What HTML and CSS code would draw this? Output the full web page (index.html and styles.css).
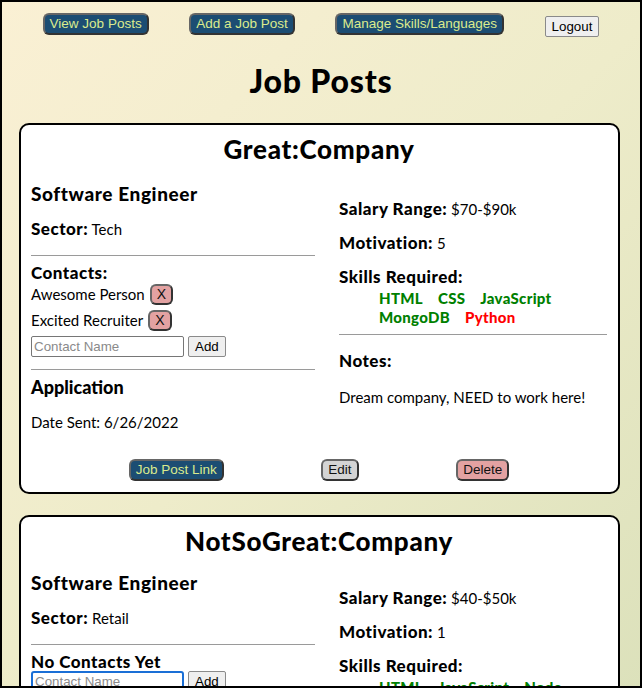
FILE: index.html
```html
<!DOCTYPE html>
<html lang="en">
<head>
<meta charset="utf-8">
<title>Job Posts</title>
<link rel="stylesheet" href="styles.css">
</head>
<body>
<nav class="nav">
  <button class="btn btn-blue">View Job Posts</button>
  <button class="btn btn-blue">Add a Job Post</button>
  <button class="btn btn-blue">Manage Skills/Languages</button>
  <button class="btn-default logout">Logout</button>
</nav>
<h1 class="page-title">Job Posts</h1>

<section class="card">
  <h2 class="company">Great:Company</h2>
  <div class="cols">
    <div class="col-left">
      <h3 class="role">Software Engineer</h3>
      <p class="line"><b>Sector:</b> Tech</p>
      <div class="rule rule-a"></div>
      <h4 class="contacts-title">Contacts:</h4>
      <div class="contact"><span>Awesome Person</span><button class="btn btn-pink btn-x">X</button></div>
      <div class="contact"><span>Excited Recruiter</span><button class="btn btn-pink btn-x">X</button></div>
      <div class="add-row"><input class="contact-input" type="text" placeholder="Contact Name"><button class="btn-default">Add</button></div>
      <div class="rule rule-b"></div>
      <h3 class="app-title">Application</h3>
      <p class="line date">Date Sent: 6/26/2022</p>
    </div>
    <div class="col-right">
      <p class="line"><b>Salary Range:</b> $70-$90k</p>
      <p class="line gap"><b>Motivation:</b> 5</p>
      <p class="line gap"><b>Skills Required:</b></p>
      <ul class="skills">
        <li class="have">HTML</li>
        <li class="have">CSS</li>
        <li class="have">JavaScript</li>
        <li class="have">MongoDB</li>
        <li class="miss">Python</li>
      </ul>
      <div class="rule rule-c"></div>
      <p class="line notes-title"><b>Notes:</b></p>
      <p class="line notes">Dream company, NEED to work here!</p>
    </div>
  </div>
  <div class="actions">
    <button class="btn btn-blue">Job Post Link</button>
    <button class="btn btn-gray">Edit</button>
    <button class="btn btn-pink">Delete</button>
  </div>
</section>

<section class="card card-compact">
  <h2 class="company">NotSoGreat:Company</h2>
  <div class="cols">
    <div class="col-left">
      <h3 class="role">Software Engineer</h3>
      <p class="line"><b>Sector:</b> Retail</p>
      <div class="rule rule-a"></div>
      <h4 class="contacts-title">No Contacts Yet</h4>
      <div class="add-row"><input class="contact-input focused" type="text" placeholder="Contact Name"><button class="btn-default">Add</button></div>
      <div class="rule rule-b"></div>
      <h3 class="app-title">Application</h3>
      <p class="line date">Date Sent: 6/20/2022</p>
    </div>
    <div class="col-right">
      <p class="line"><b>Salary Range:</b> $40-$50k</p>
      <p class="line gap"><b>Motivation:</b> 1</p>
      <p class="line gap"><b>Skills Required:</b></p>
      <ul class="skills">
        <li class="have">HTML</li>
        <li class="have">JavaScript</li>
        <li class="have">Node</li>
      </ul>
    </div>
  </div>
</section>
</body>
</html>
```

FILE: styles.css
```css
html {
  height: 100%;
}
body {
  margin: 0;
  height: 100vh;
  box-sizing: border-box;
  border: 2px solid #000;
  overflow: hidden;
  background: linear-gradient(135deg, #faf0d4 0%, #eeecca 50%, #dce1bb 100%);
  font-family: Lato, "Open Sans", sans-serif;
  color: #000;
}
.nav {
  display: flex;
  justify-content: space-evenly;
  align-items: flex-start;
  padding-top: 11px;
}
.btn {
  font-family: "Liberation Sans", Arial, sans-serif;
  font-size: 13.5px;
  line-height: 16px;
  padding: 1px 5px;
  border: 2px solid #444;
  border-color: #666 #333 #333 #666;
  border-radius: 6px;
  cursor: pointer;
}
.btn-blue {
  background: #1c4d73;
  color: #dbeb8d;
}
.btn-gray {
  background: #d4d4d4;
  color: #111;
}
.btn-pink {
  background: #e3a2a2;
  color: #111;
}
.btn-default {
  font-family: "Liberation Sans", Arial, sans-serif;
  font-size: 13.33px;
  line-height: 15px;
  padding: 2px 6px;
  background: #efefef;
  border: 1px solid #8a8a8a;
  border-radius: 2px;
  color: #000;
}
.logout {
  margin-top: 3px;
}
.page-title {
  margin: 26px 0 24px;
  text-align: center;
  font-size: 32px;
  line-height: 36px;
  font-weight: 900;
  letter-spacing: 0.8px;
}
.card {
  background: #fff;
  border: 2px solid #000;
  border-radius: 10px;
  margin: 0 20px 21px 17px;
  padding: 10px 11px 11px 10px;
}
.company {
  margin: 0;
  text-align: center;
  font-size: 26px;
  line-height: 28px;
  font-weight: 900;
  letter-spacing: 0.7px;
}
.cols {
  display: grid;
  grid-template-columns: 284px 1fr;
  column-gap: 24px;
  align-items: start;
  margin-top: 20px;
}
.card-compact .cols {
  margin-top: 17px;
}
.col-right {
  padding-top: 16px;
}
.role {
  margin: 0;
  font-size: 19px;
  line-height: 22px;
  font-weight: 900;
  letter-spacing: 0.6px;
}
.line {
  margin: 14px 0 0;
  font-size: 15px;
  line-height: 20px;
}
.line b {
  font-size: 17px;
  font-weight: 900;
  letter-spacing: 0.5px;
}
.col-right .line:first-child {
  margin-top: 0;
}
.gap {
  margin-top: 14px;
}
.rule {
  border-top: 1px solid #9a9a9a;
  height: 0;
}
.rule-a {
  margin: 16px 0 8px;
}
.rule-b {
  margin: 12px 0 6px;
}
.rule-c {
  margin: 7px 0 16px;
}
.contacts-title {
  margin: 0;
  font-size: 17px;
  line-height: 18px;
  font-weight: 900;
  letter-spacing: 0.5px;
}
.contact {
  display: flex;
  align-items: center;
  gap: 5px;
  height: 20px;
  margin-top: 2px;
  margin-bottom: 6px;
  font-size: 15px;
}
.btn-x {
  padding: 1px 5px;
  line-height: 15px;
  font-size: 14px;
}
.add-row {
  display: flex;
  align-items: center;
  gap: 4px;
}
.contact-input {
  width: 153px;
  height: 21px;
  box-sizing: border-box;
  font-family: "Liberation Sans", Arial, sans-serif;
  font-size: 13.33px;
  padding: 1px 2px;
  border: 1px solid #767676;
  border-radius: 2px;
}
.contact-input::placeholder {
  color: #8a8a8a;
}
.contact-input.focused {
  border: 2px solid #1a6fd6;
  border-radius: 3px;
}
.app-title {
  margin: 0;
  font-size: 18px;
  line-height: 22px;
  font-weight: 900;
}
.date {
  margin-top: 14px;
}
.skills {
  list-style: none;
  margin: 2px 0 0;
  padding: 0 0 0 40px;
  display: flex;
  flex-wrap: wrap;
  column-gap: 15px;
  font-size: 15px;
  line-height: 19px;
  font-weight: 900;
  letter-spacing: 0.3px;
}
.have {
  color: #008000;
}
.miss {
  color: #ff0000;
}
.notes-title {
  margin-top: 0;
}
.notes {
  margin-top: 16px;
}
.actions {
  display: flex;
  justify-content: space-evenly;
  margin-top: 27px;
}
```
